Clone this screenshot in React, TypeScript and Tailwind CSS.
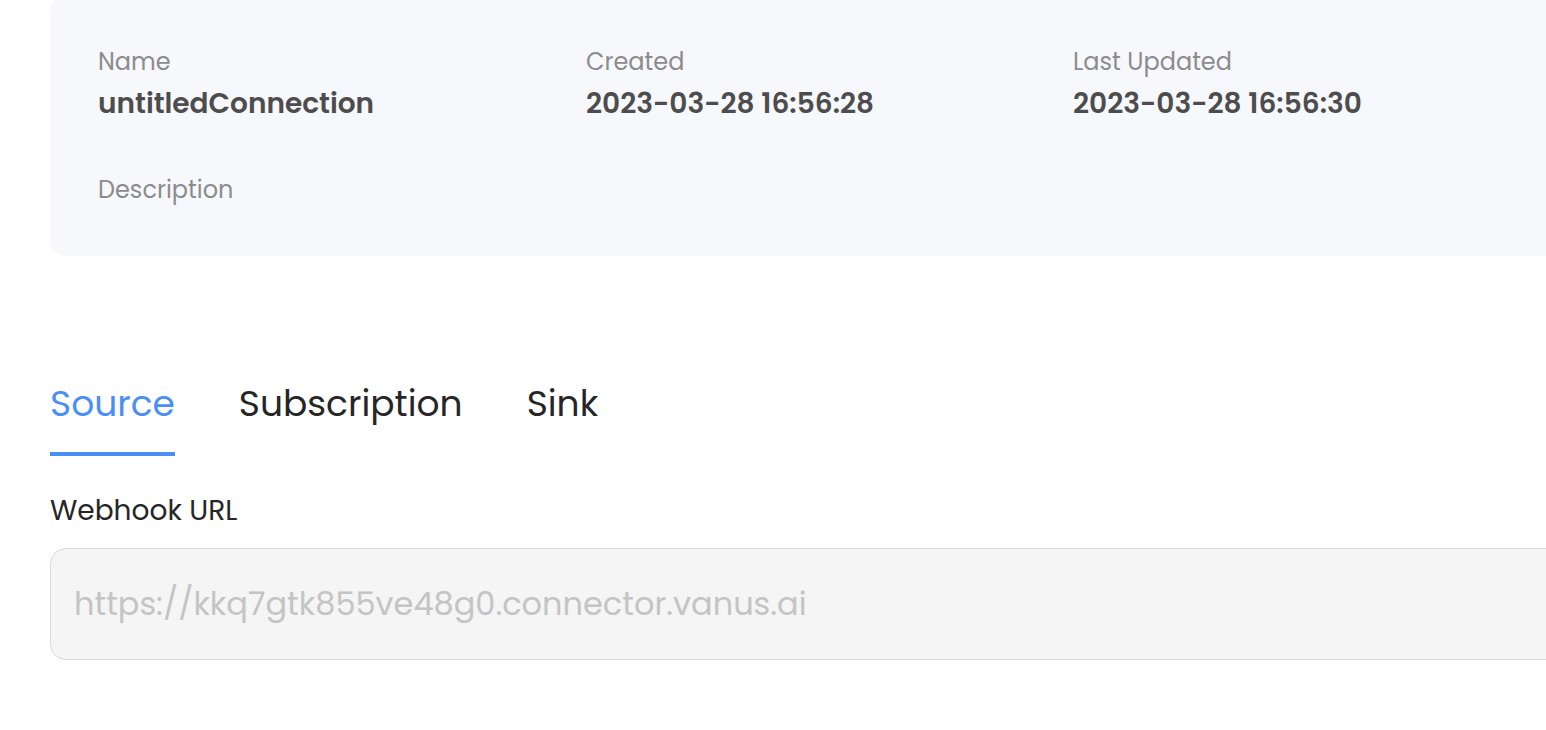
import { useState } from 'react'

const fields = [
  { label: 'Name', value: 'untitledConnection' },
  { label: 'Created', value: '2023-03-28 16:56:28' },
  { label: 'Last Updated', value: '2023-03-28 16:56:30' },
]

const tabs = ['Source', 'Subscription', 'Sink']

export default function App() {
  const [active, setActive] = useState('Source')

  return (
    <div
      className="h-[730px] w-full overflow-hidden bg-white pl-[50px]"
      style={{ fontFamily: 'Poppins, Inter, "Noto Sans", sans-serif' }}
    >
      <div className="-mt-[4px] w-[1560px] rounded-2xl bg-[#f7f8fc] px-12 pt-[50px] pb-[50px]">
        <div className="grid grid-cols-[488px_487px_1fr]">
          {fields.map((f) => (
            <div key={f.label} className="flex flex-col gap-[8px]">
              <span className="text-[24px] leading-[32px] text-[#8c8c8c]">{f.label}</span>
              <span className="text-[28px] leading-[36px] font-semibold text-[#4d4d4d]">{f.value}</span>
            </div>
          ))}
        </div>
        <div className="mt-[52px] text-[24px] leading-[32px] text-[#8c8c8c]">Description</div>
      </div>

      <div className="mt-[124px] flex gap-16">
        {tabs.map((t) => (
          <button
            key={t}
            onClick={() => setActive(t)}
            className={`border-b-4 pb-[24px] text-[36px] leading-[48px] ${
              active === t ? 'border-[#4a8ff5] text-[#4a8ff5]' : 'border-transparent text-[#262626]'
            }`}
          >
            {t}
          </button>
        ))}
      </div>

      <div className="mt-[37px] text-[28px] leading-[36px] text-[#262626]">Webhook URL</div>
      <div className="mt-[19px] flex h-[112px] w-[1560px] items-center rounded-2xl border border-[#d9d9d9] bg-[#f5f5f5] pl-[23px]">
        <span className="text-[32px] text-[#c4c4c4]">https://kkq7gtk855ve48g0.connector.vanus.ai</span>
      </div>
    </div>
  )
}
